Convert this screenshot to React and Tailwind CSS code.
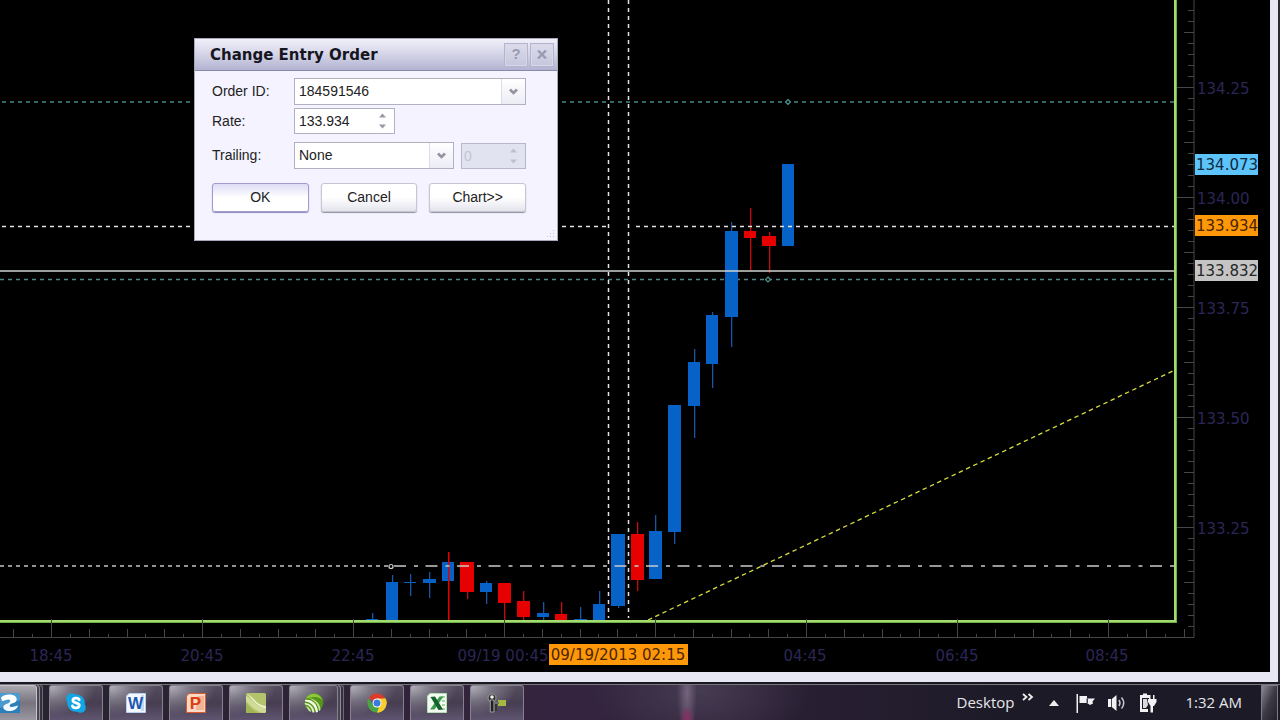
import React from "react";

const BLUE = "#0662c6";
const RED = "#e60000";

// x, width, body top, body bottom, wick top, wick bottom, colour, wick colour
const CANDLES = [
  [366, 12, 619, 621, 613, 621, BLUE],
  [386, 12, 582, 621, 575, 621, BLUE],
  [404, 12, 582, 583, 574, 596, BLUE],
  [423, 13, 579, 583, 572, 598, BLUE],
  [442, 12, 562, 581, 552, 621, BLUE, RED],
  [460, 14, 562, 592, 562, 599, RED],
  [480, 12, 583, 592, 581, 604, BLUE],
  [498, 13, 583, 603, 583, 621, RED],
  [517, 13, 601, 617, 591, 621, RED],
  [537, 12, 613, 617, 602, 620, BLUE],
  [555, 12, 614, 621, 602, 621, RED],
  [574, 13, 619, 621, 607, 621, BLUE],
  [593, 12, 604, 621, 591, 621, BLUE],
  [611, 14, 534, 606, 534, 608, BLUE],
  [631, 13, 534, 580, 522, 591, RED],
  [649, 13, 531, 579, 515, 579, BLUE],
  [668, 13, 405, 532, 405, 544, BLUE],
  [688, 12, 362, 406, 349, 438, BLUE],
  [706, 12, 315, 364, 312, 388, BLUE],
  [725, 13, 231, 317, 222, 347, BLUE],
  [744, 12, 231, 238, 208, 271, RED],
  [762, 14, 236, 246, 232, 273, RED],
  [782, 12, 164, 246, 164, 246, BLUE],
];

const PRICES = ["134.25", "134.00", "133.75", "133.50", "133.25"];
const TIMES = [
  ["18:45", 51],
  ["20:45", 202],
  ["22:45", 353],
  ["09/19 00:45", 503],
  ["04:45", 805],
  ["06:45", 957],
  ["08:45", 1107],
];
const TAGS = [
  ["134.073", 154, "#5cc4fa", "#10283c"],
  ["133.934", 215, "#ff9808", "#4a2400"],
  ["133.832", 260, "#c4c4c4", "#262626"],
];

function Chart() {
  const priceTicks = [];
  for (let i = -8; i < 50; i++) {
    const y = 88 + i * 11;
    if (y > 0 && y < 630) {
      const len = i % 10 === 0 ? 17 : i % 5 === 0 ? 10 : 6;
      priceTicks.push(<path key={i} d={`M${1194 - len} ${y - 0.5}H1194`} />);
    }
  }
  const timeTicks = [];
  for (let i = -2; i < 61; i++) {
    const x = Math.round(52 + i * 18.875);
    const top = i % 8 === 0 ? 619 : i % 2 === 0 ? 629 : 634;
    timeTicks.push(<path key={i} d={`M${x - 0.5} ${top}V638`} />);
  }
  return (
    <svg
      viewBox="0 0 1270 672"
      preserveAspectRatio="xMaxYMax slice"
      className="block h-full w-full bg-black font-['DejaVu_Sans',sans-serif] text-[15px]"
      role="img"
      aria-label="Price chart"
    >
      <g fill="none">
        <path d="M2 102H1175" stroke="#4b8584" strokeWidth="1.5" strokeDasharray="4 4" />
        <path d="M0 279.5H1175" stroke="#4b8584" strokeWidth="1.5" strokeDasharray="4 4" />
      </g>
      {CANDLES.map(([x, w, top, bottom, wickTop, wickBottom, color, wick]) => {
        const cx = x + Math.floor(w / 2);
        return (
          <g key={x}>
            <rect x={x} y={top} width={w} height={bottom - top} fill={color} />
            <rect
              x={cx}
              y={wickTop}
              width={wick ? 1.5 : 1.3}
              height={wickBottom - wickTop}
              fill={wick || (color === BLUE ? "#1a55a4" : "#c80a10")}
            />
            {!wick && <rect x={x} y={top} width={w} height={bottom - top} fill={color} />}
          </g>
        );
      })}
      <g fill="none" stroke="#e4e4e4" strokeWidth="1.5">
        <path d="M2 226.5H606M636 226.5H1175" strokeDasharray="4 4" />
        <path d="M0 271H1175" stroke="#cfd4cf" />
        <path d="M0 566H391" stroke="#c4c4c4" strokeDasharray="4 4" />
        <path d="M394 566H1175" stroke="#cacaca" strokeDasharray="12 8 4 7.5" />
        <path d="M608.5 0V618M628.5 0V618" strokeDasharray="4 4" />
      </g>
      <path d="M648 620L1175 370" stroke="#d8dc3c" strokeWidth="1.3" strokeDasharray="4.5 3.5" fill="none" />
      <g fill="#000" strokeWidth="1.2">
        <path d="M788 99.500L790.500 102L788 104.500L785.500 102Z" stroke="#4a9494" />
        <path d="M768 277L770.500 279.500L768 282L765.500 279.500Z" stroke="#4a9494" />
        <circle cx="391" cy="566.500" r="2" stroke="#d0d0d0" />
      </g>
      <g fill="none">
        <path d="M0 621.500H1175.500V0" stroke="#6fae48" strokeWidth="3" />
        <path d="M0 621H1175V0" stroke="#b4ec7c" strokeWidth="1.5" />
      </g>
      <g fill="none" stroke="#464646">
        <path d="M1194 0V637.500H0" />
        {priceTicks}
        {timeTicks}
      </g>
      <g fill="#2b2656">
        {PRICES.map((price, i) => (
          <text key={price} x="1197" y={94 + i * 110}>
            {price}
          </text>
        ))}
        {TIMES.map(([time, x]) => (
          <text key={time} x={x} y="661" textAnchor="middle">
            {time}
          </text>
        ))}
      </g>
      {TAGS.map(([value, y, fill, ink]) => (
        <g key={value}>
          <rect x="1195" y={y} width="63" height="21" fill={fill} />
          <text x="1196" y={y + 16} fill={ink}>
            {value}
          </text>
        </g>
      ))}
      <rect x="549" y="644" width="139" height="21" fill="#ff9808" />
      <text x="618" y="660" textAnchor="middle" fill="#4a2400">
        09/19/2013 02:15
      </text>
    </svg>
  );
}

function DropDown({ id, options, className }) {
  return (
    <div className={`relative h-[27px] border border-[#b1b1c4] bg-white ${className}`}>
      <select id={id} className="h-full w-full appearance-none bg-transparent pl-1 text-[#222] outline-none">
        {options.map((option) => (
          <option key={option}>{option}</option>
        ))}
      </select>
      <span className="pointer-events-none absolute inset-y-0 right-0 flex w-6 items-center justify-center border-l border-[#dcdce8] bg-linear-to-b from-white to-[#ececf5]">
        <svg width="9" height="7" viewBox="0 0 9 7" fill="none" stroke="#9292a0" strokeWidth="2.600">
          <path d="M1 1.500L4.500 5L8 1.500" />
        </svg>
      </span>
    </div>
  );
}

function Spinner({ id, label, value, disabled, className }) {
  return (
    <div
      className={`flex h-[26px] items-center border pr-2 ${
        disabled ? "border-[#b8b8cc] bg-[#e2e3f0]" : "border-[#b1b1c4] bg-white"
      } ${className}`}
    >
      <input
        id={id}
        aria-label={label}
        defaultValue={value}
        disabled={disabled}
        className="h-full w-full min-w-0 flex-1 bg-transparent pl-1 text-[#222] outline-none disabled:pl-0.5 disabled:text-[#c4c4d0]"
      />
      <svg width="7" height="16" viewBox="0 0 7 16" fill={disabled ? "#bfc0ce" : "#9999a5"}>
        <path d="M0 4.500L3.500 0.500L7 4.500ZM0 11.500L3.500 15.500L7 11.500Z" />
      </svg>
    </div>
  );
}

function DialogButton({ children, primary }) {
  return (
    <button
      type="button"
      className={`h-[29px] flex-1 rounded-[3px] border text-[#222] ${
        primary
          ? "border-[#9f9bd0] bg-linear-to-b from-[#dedcf6] via-white to-white shadow-[0_1px_1px_#8f8cc0]"
          : "border-[#c6c6d2] bg-linear-to-b from-white via-white to-[#e4e4ee] shadow-[0_1px_1px_#9090a0]"
      }`}
    >
      {children}
    </button>
  );
}

function OrderDialog() {
  const caption =
    "flex size-6 items-center justify-center border border-[#b4b4ce] bg-linear-to-b from-[#dcdcec] to-[#c6c6dc] text-[15px] font-bold text-[#9a9ab0] shadow-[inset_0_0_0_1px_#d8d8ea]";
  return (
    <section
      role="dialog"
      aria-labelledby="dialog-title"
      className="absolute top-[38px] left-[194px] w-[364px] border border-[#a9a9bd] bg-[#f5f3ff] pb-7 font-['Liberation_Sans',sans-serif] text-[14px] text-[#222]"
    >
      <header className="flex h-8 items-center gap-0.5 border-b border-[#8888a8] bg-linear-to-b from-[#f0f0fa] via-[#d4d4e7] to-[#b3b3d2] pr-[3px] pl-[15px]">
        <h1 id="dialog-title" className="flex-1 pt-0.5 font-['DejaVu_Sans',sans-serif] text-[15px] font-bold text-[#16161e]">
          Change Entry Order
        </h1>
        <button type="button" aria-label="Help" className={caption}>
          ?
        </button>
        <button type="button" aria-label="Close" className={caption}>
          <svg width="10" height="9" viewBox="0 0 10 9" stroke="#9a9ab0" strokeWidth="2.400">
            <path d="M1 0.500L9 8.500M9 0.500L1 8.500" />
          </svg>
        </button>
      </header>
      <form className="pt-[7px] pr-[31px] pl-[17px]">
        <div className="flex items-center">
          <label htmlFor="order" className="w-[82px]">
            Order ID:
          </label>
          <DropDown id="order" options={["184591546"]} className="flex-1" />
        </div>
        <div className="mt-[3px] flex items-center">
          <label htmlFor="rate" className="w-[82px]">
            Rate:
          </label>
          <Spinner id="rate" label="Rate" value="133.934" className="w-[101px]" />
        </div>
        <div className="mt-2 flex items-center">
          <label htmlFor="trailing" className="w-[82px]">
            Trailing:
          </label>
          <DropDown id="trailing" options={["None"]} className="w-40" />
          <Spinner id="distance" label="Trailing distance" value="0" disabled className="ml-[7px] flex-1" />
        </div>
        <div className="mt-[14px] flex gap-3">
          <DialogButton primary>OK</DialogButton>
          <DialogButton>Cancel</DialogButton>
          <DialogButton>Chart&gt;&gt;</DialogButton>
        </div>
      </form>
      <svg className="absolute right-0.5 bottom-0.5" width="8" height="8" viewBox="0 0 8 8" fill="#c2c2d0">
        <path d="M6 0h1v1h-1zM6 3h1v1h-1zM6 6h1v1h-1zM3 3h1v1h-1zM3 6h1v1h-1zM0 6h1v1h-1z" />
      </svg>
    </section>
  );
}

const icon = "size-5 shrink-0";

const SyncIcon = () => (
  <svg className={icon} viewBox="0 0 20 20">
    <rect width="20" height="20" fill="#2d7fb9" />
    <path d="M0 0h20v7L0 15z" fill="#4a9ad0" />
    <path d="M1 4.500C4 1 12 0.500 15.500 3.500C18 6.500 16.500 9.500 12 10.500L7.500 11.500C9 9.500 11 8.500 10 7C8.500 5.500 5 7.500 2 8Z" fill="#fff" />
    <path d="M3.500 13C6 10.500 9 10 11.500 10.500C9.500 12 9 13.500 11 14C13 14.300 15 13 18 12.500C17 17 12 18.500 8 18C4.500 17.500 2.500 15.500 3.500 13Z" fill="#f1f8ff" />
  </svg>
);

const SkypeIcon = () => (
  <svg className={icon} viewBox="0 0 20 20">
    <g fill="#12a5e4">
      <circle cx="10" cy="10" r="8.800" />
      <circle cx="5.500" cy="5.500" r="5.300" />
      <circle cx="14.500" cy="14.500" r="5.300" />
    </g>
    <path
      d="M13.200 6.800C12.600 4.600 7 4.500 6.900 7.400C6.900 10.400 13.400 9.300 13.300 12.400C13 15.700 7 15.400 6.500 12.900"
      fill="none"
      stroke="#fff"
      strokeWidth="2.800"
      strokeLinecap="round"
    />
  </svg>
);

const WordIcon = () => (
  <svg className={icon} viewBox="0 0 20 20">
    <path d="M3 0.500H19.500V19.500H0.500V3Z" fill="#f3f8ff" stroke="#b9cdf0" />
    <path d="M15 2h3v16h-3z" fill="#c6d8f2" />
    <text x="9.500" y="15.500" textAnchor="middle" fill="#1c57b0" fontSize="16" fontWeight="bold" fontFamily="Liberation Sans">
      W
    </text>
  </svg>
);

const PowerPointIcon = () => (
  <svg className={icon} viewBox="0 0 20 20">
    <path d="M3 0.500H19.500V19.500H0.500V3Z" fill="#fbd9c8" stroke="#e2592c" />
    <path d="M12 3h6v14h-8z" fill="#f4b394" />
    <text x="9.500" y="16" textAnchor="middle" fill="#d9400e" fontSize="17" fontWeight="bold" fontFamily="Liberation Sans">
      P
    </text>
  </svg>
);

const ExcelIcon = () => (
  <svg className={icon} viewBox="0 0 20 20">
    <path d="M3 0.500H19.500V19.500H0.500V3Z" fill="#f2fbf0" stroke="#b7ddb6" />
    <path d="M14 4h4M15 8h3M15 12h3M14 16h4" stroke="#a5d6a2" strokeWidth="2" />
    <path d="M12.500 3.500H16.500L7.500 16.500H3Z" fill="#3b9d4c" />
    <path d="M3.500 4L8 3.500L16 16.500L11.500 17Z" fill="#15602b" />
  </svg>
);

const CamtasiaIcon = () => (
  <svg className={icon} viewBox="0 0 20 20">
    <rect width="20" height="20" rx="1.500" fill="#b4c46c" />
    <path d="M0 3C5 4 9 14 20 15V19L18 20C8 18 4 12 0 8Z" fill="#cfdb96" />
    <path d="M1 1C7 3 10 12 20 13V15C10 14 6 5 1 1Z" fill="#edf2cc" />
    <path d="M0 10C4 14 7 18 12 20H0Z" fill="#a3b656" />
  </svg>
);

const LeafIcon = () => (
  <svg className={icon} viewBox="0 0 20 20">
    <circle cx="10" cy="9.500" r="9.300" fill="#559416" />
    <path d="M2 5C6 -1 16 -1 19 8C16 3.500 10 3.500 5 5Z" fill="#8cc83c" />
    <path d="M1 7C8 6 13.500 11 14 19L12 19.500C11 13 7 9 1 8.500Z" fill="#f3fae6" />
    <path d="M0.800 10C6 10 10 14 10.500 19.500H8.500C8 15 5 12 0.800 11.500Z" fill="#e2f0cb" />
    <path d="M1.500 13C4 13.500 6.500 16 7 19L5 18C4 16 3 15 1.500 13Z" fill="#d1e8ac" />
    <path d="M5 5C12 6 16.500 11 16.500 17L15 18C14.500 12 11 7.500 5 5Z" fill="#c5e39a" />
  </svg>
);

const ChromeIcon = () => (
  <svg className={icon} viewBox="0 0 20 20">
    <path d="M10 10L1.770 5.250A9.500 9.500 0 0 1 18.230 5.250Z" fill="#dc3b2c" />
    <path d="M10 10L18.230 5.250A9.500 9.500 0 0 1 10 19.500Z" fill="#f8cf2e" />
    <path d="M10 5.500H18.400A9.500 9.500 0 0 1 10 19.500L14 12Z" fill="#f8cf2e" />
    <path d="M1.770 5.250L6 12.300L12 14.500L10 19.500A9.500 9.500 0 0 1 1.770 5.250Z" fill="#4ba446" />
    <circle cx="10" cy="10" r="4.500" fill="#fff" />
    <circle cx="10" cy="10" r="3.500" fill="#3a7be0" />
  </svg>
);

const KeyIcon = () => (
  <svg className={icon} viewBox="0 0 20 20">
    <path d="M11 7h8v6h-8z" fill="#a4b940" />
    <path d="M8 9h4v2h-4z" fill="#707070" />
    <circle cx="5" cy="5" r="4" fill="#333" stroke="#8d8d8d" strokeWidth="1.200" />
    <path d="M3.300 7h3.600v12h-3.600z" fill="#202020" stroke="#b5b5b5" strokeWidth="0.800" />
    <circle cx="5" cy="4" r="1.800" fill="#f2f2f2" />
    <path d="M8 11h2v7H8z" fill="#353535" />
  </svg>
);

function Task({ label, children, active, narrow, stacked }) {
  return (
    <div className="flex h-full shrink-0">
      <button
        type="button"
        aria-label={label}
        className={`flex h-full items-center justify-center rounded-t-[3px] border border-b-0 ${
          active
            ? "w-[37px] justify-start rounded-l-none border-l-0 border-[#c8c4cc] bg-linear-to-b from-[#aaa8b0] via-[#77737f] to-[#9a96a2] pr-4"
            : `border-[#85818f] bg-[radial-gradient(ellipse_46px_30px_at_0px_0px,#b4b1bb_0%,#7b7684_45%,transparent_100%),linear-gradient(to_bottom,#544d5e,#463d51_50%,#5f5570)] ${
                narrow ? "w-[49px]" : "w-[54px]"
              }`
        }`}
      >
        {children}
      </button>
      {stacked && (
        <>
          <span className="w-[3px] rounded-tr-[3px] border-t border-r border-[#8c8895] bg-[#4a4552]" />
          <span className="w-[3px] rounded-tr-[3px] border-t border-r border-[#6c6875] bg-[#36313e]" />
        </>
      )}
    </div>
  );
}

function Taskbar() {
  return (
    <footer className="flex h-[38px] shrink-0 items-stretch overflow-hidden border-t-2 border-[#191820] bg-linear-to-r from-[#26232d] via-[#35243f] via-45% to-[#1c1a27] to-80% font-['Open_Sans','Noto_Sans',sans-serif] text-[15px] text-[#e6e6ea]">
      <div className="flex min-w-0 flex-1 border-t border-[#77747e] bg-[radial-gradient(ellipse_8px_12px_at_687px_33px,#8a2f64_0%,transparent_100%),radial-gradient(ellipse_10px_40px_at_687px_8px,#74657c_0%,transparent_100%),radial-gradient(ellipse_110px_60px_at_700px_6px,#463c52_0%,transparent_100%)]">
        <nav aria-label="Running programs" className="flex shrink-0 gap-1.5">
          <Task label="Sync" active stacked>
            <SyncIcon />
          </Task>
          <Task label="Skype">
            <SkypeIcon />
          </Task>
          <Task label="Word">
            <WordIcon />
          </Task>
          <Task label="PowerPoint">
            <PowerPointIcon />
          </Task>
          <Task label="Camtasia">
            <CamtasiaIcon />
          </Task>
          <Task label="Trading Station" narrow stacked>
            <LeafIcon />
          </Task>
          <Task label="Chrome">
            <ChromeIcon />
          </Task>
          <Task label="Excel">
            <ExcelIcon />
          </Task>
          <Task label="Keys">
            <KeyIcon />
          </Task>
        </nav>
        <div className="ml-auto flex shrink-0 items-center">
          <span>Desktop</span>
          <button type="button" aria-label="More toolbars" className="ml-2 self-start pt-2">
            <svg width="12" height="8" viewBox="0 0 12 8" fill="none" stroke="#eee" strokeWidth="1.800">
              <path d="M1 1L4.500 4L1 7M6.500 1L10 4L6.500 7" />
            </svg>
          </button>
          <button type="button" aria-label="Show hidden icons" className="ml-[15px]">
            <svg width="10" height="6" viewBox="0 0 10 6" fill="#eee">
              <path d="M0 6L5 0L10 6Z" />
            </svg>
          </button>
          <svg className="ml-[17px]" width="20" height="20" viewBox="0 0 20 20" fill="#f2f2f4">
            <path d="M0.500 1H2V20H0.500ZM3.500 3H11V5.500H19L16.500 8.500L17 10.500L14 12L11 10H3.500Z" />
            <path d="M10.500 5.500H12V10H10.500Z" fill="#47444f" />
          </svg>
          <svg className="ml-3" width="19" height="20" viewBox="0 0 19 20" fill="#f2f2f4">
            <path d="M0 6H3V14H0ZM3.800 6L8.500 2V18L3.800 14Z" />
            <path d="M11 7Q13 10 11 13M13.500 4.500Q18 10 13.500 15.500" fill="none" stroke="#c8c8d0" strokeWidth="1.500" />
          </svg>
          <svg className="ml-3" width="18" height="20" viewBox="0 0 18 20">
            <path d="M4 2V0.500H8V2H10V5H3V16H9V19H1V2Z" fill="#f2f2f4" />
            <path d="M4 6H8L9 12L7 15H4Z" fill="#d8d8e0" />
            <path d="M9 6H10V2H11.500V6H14V2H15.500V6H17.500V9L15 13H14V19.500H11.500V13L9 9Z" fill="#f2f2f4" />
          </svg>
          <time className="ml-7">1:32 AM</time>
          <button
            type="button"
            aria-label="Show desktop"
            className="mr-0.5 ml-[19px] h-full w-[17px] border border-b-0 border-[#7e7b86] bg-linear-to-br from-[#8d8a94] via-[#3c3944] to-[#24212d]"
          />
        </div>
      </div>
    </footer>
  );
}

export default function App() {
  return (
    <div className="flex h-screen flex-col overflow-hidden bg-[#e7e6f3]">
      <main className="relative min-h-0 flex-1 overflow-hidden border-r-2 border-[#292833] pr-2 pb-2.5">
        <Chart />
        <OrderDialog />
      </main>
      <Taskbar />
    </div>
  );
}
